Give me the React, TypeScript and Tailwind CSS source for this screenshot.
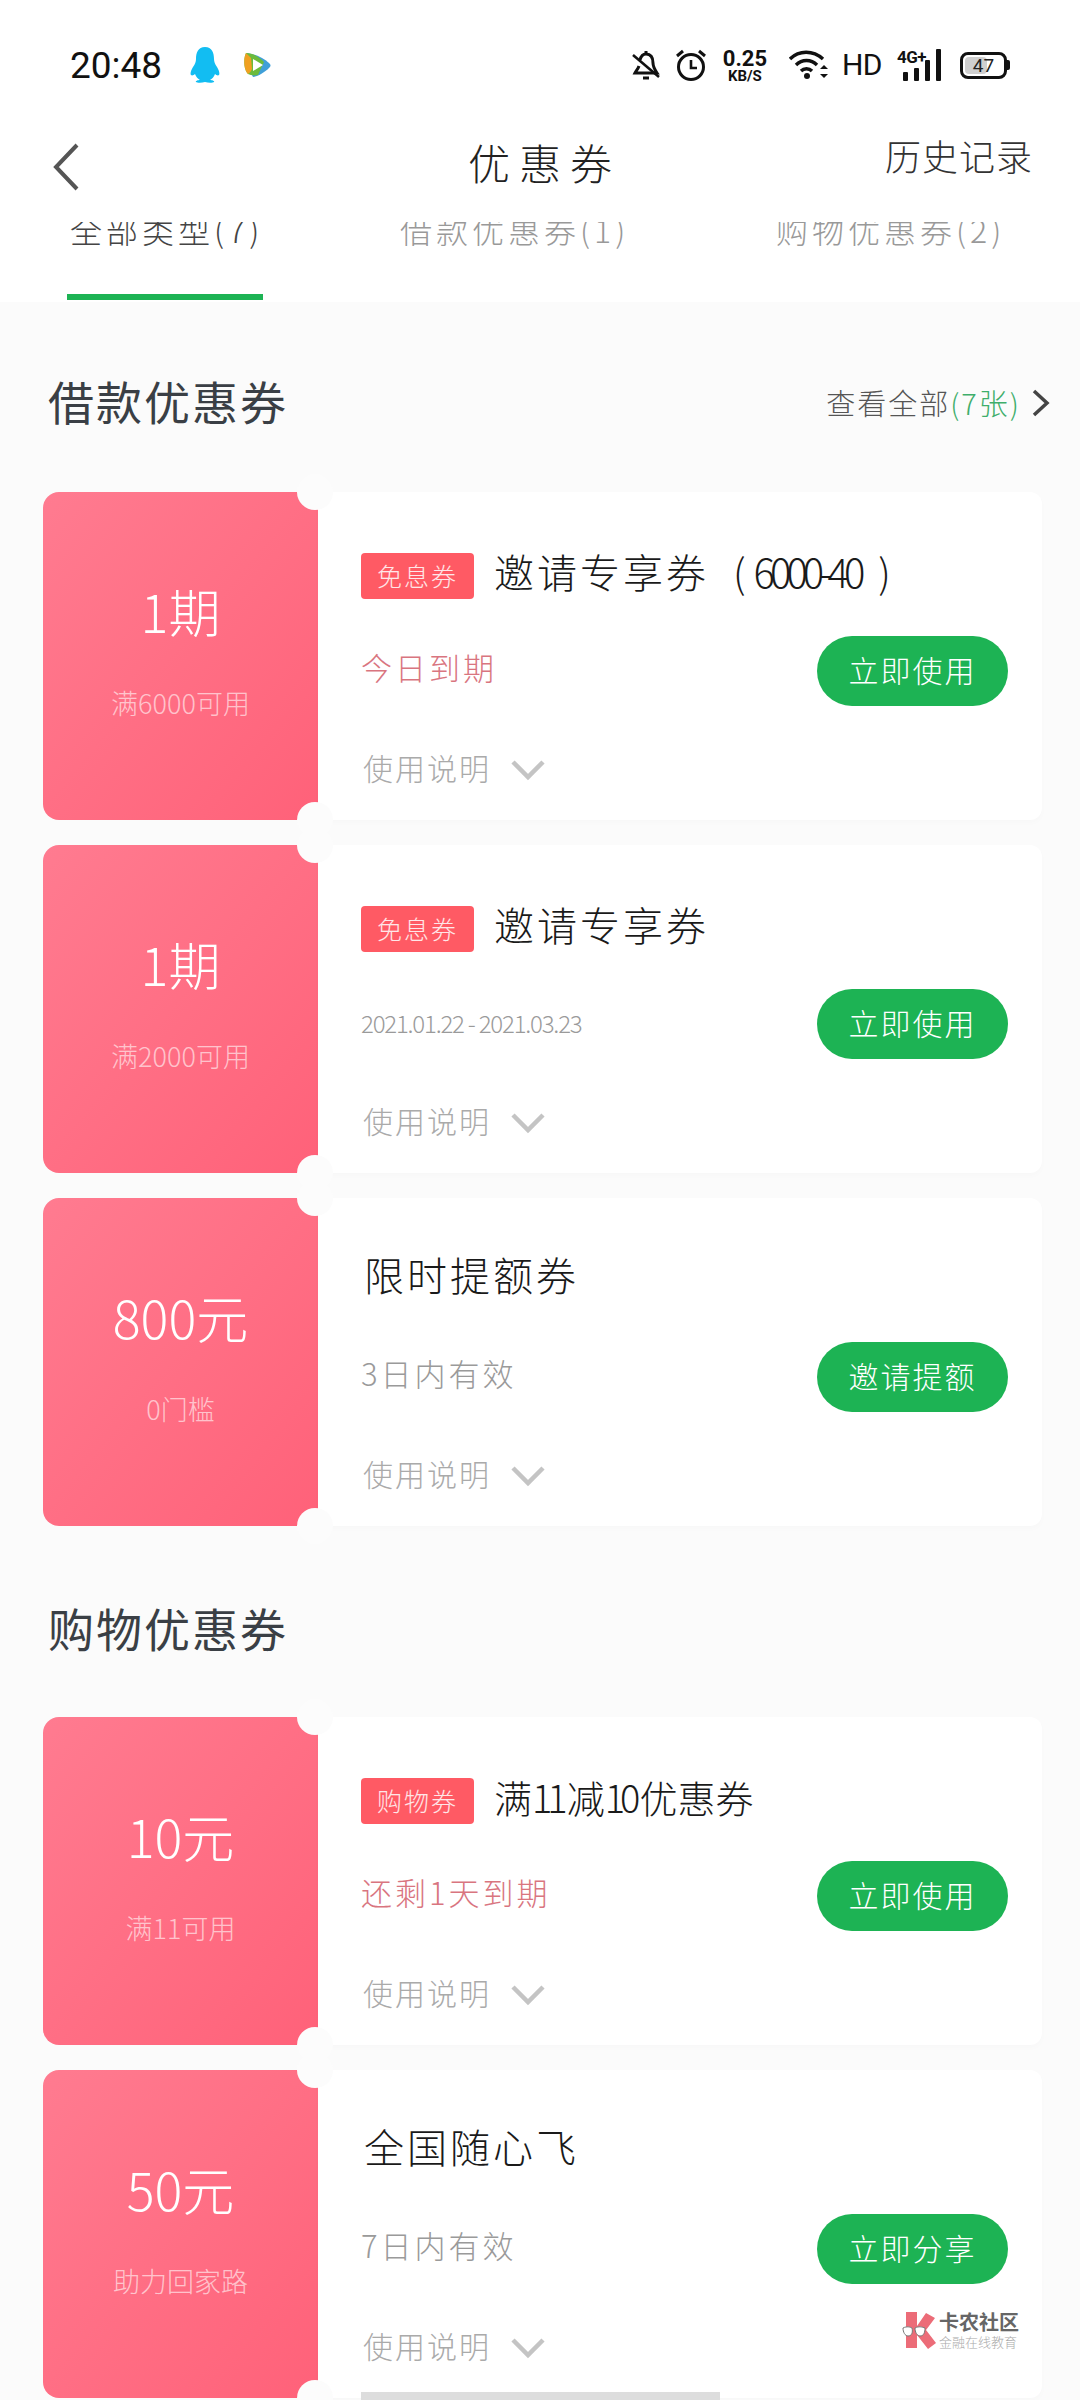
import React from 'react';

interface Coupon {
  amount: React.ReactNode;
  condition: string;
  tag?: string;
  title: React.ReactNode;
  validity: React.ReactNode;
  urgent?: boolean;
  action: string;
  extra?: boolean;
}

const Narrow = ({ children }: { children: React.ReactNode }) => (
  <span className="tracking-[-5px]">{children}</span>
);

const loanCoupons: Coupon[] = [
  {
    amount: '1期',
    condition: '满6000可用',
    tag: '免息券',
    title: (
      <>
        邀请专享券<span className="ml-[24px] tracking-[0px]">(</span>
        <span className="ml-[8px]"><Narrow>6000-40</Narrow></span>
        <span className="ml-[18px]">)</span>
      </>
    ),
    validity: '今日到期',
    urgent: true,
    action: '立即使用',
  },
  {
    amount: '1期',
    condition: '满2000可用',
    tag: '免息券',
    title: '邀请专享券',
    validity: <span className="text-[24px] tracking-[-1.2px]">2021.01.22 - 2021.03.23</span>,
    action: '立即使用',
  },
  { amount: '800元', condition: '0门槛', title: '限时提额券', validity: '3日内有效', action: '邀请提额' },
];

const shopCoupons: Coupon[] = [
  {
    amount: '10元',
    condition: '满11可用',
    tag: '购物券',
    title: <span className="text-[38px] tracking-[0px]">满<Narrow>11</Narrow><span className="ml-[4px]">减</span><Narrow>10</Narrow><span className="ml-[4px]">优惠券</span></span>,
    validity: '还剩1天到期',
    urgent: true,
    action: '立即使用',
  },
  { amount: '50元', condition: '助力回家路', title: '全国随心飞', validity: '7日内有效', action: '立即分享', extra: true },
];

const Penguin = () => (
  <svg width="30" height="36" viewBox="0 0 30 36" className="ml-[28px]">
    <path d="M15 0C8 0 6 6 6 12c0 3-1 5-3 8-2 3-3 7-2 8s3 0 4-1c1 3 3 5 5 6-2 0-5 1-4 2 1 1 6 1 9 0 3 1 8 1 9 0 1-1-2-2-4-2 2-1 4-3 5-6 1 1 3 2 4 1s0-5-2-8c-2-3-3-5-3-8 0-6-2-12-9-12z" fill="#12bdf2" />
  </svg>
);

const VideoLogo = () => (
  <svg width="28" height="26" viewBox="0 0 28 26" className="ml-[23px]">
    <path d="M4 1c8 1 16 5 22 10 2 2 2 3 0 5-4 4-10 8-16 9L4 13z" fill="#3f9fd8" />
    <path d="M3 1c7 0 14 4 18 9l-6 13c-4 1-8 0-10-1C1 18 0 7 3 1z" fill="#6cbb3c" />
    <path d="M3 1C0 7 1 18 5 22c2-1 3-3 4-5L8 6z" fill="#f0a020" />
    <path d="M10 7l10 6-10 6z" fill="#ffffff" />
  </svg>
);

const AlarmIcon = () => (
  <svg width="32" height="32" viewBox="0 0 32 32" fill="none" stroke="#111" strokeWidth="3" className="ml-[15px]">
    <circle cx="16" cy="18" r="12.5" />
    <path d="M16 11v8h6" strokeWidth="2.6" />
    <path d="M2 7l6-5M30 7l-6-5" strokeWidth="3" />
  </svg>
);

const BellIcon = () => (
  <svg width="28" height="32" viewBox="0 0 28 32" fill="none" stroke="#111" strokeWidth="3">
    <path d="M14 2v3" />
    <path d="M8 11c1-4 3-6 6-6 5 0 7 4 7 9 0 4 2 7 4 10H3c1-2 3-4 4-7" />
    <path d="M1 6l26 22" strokeWidth="2.6" />
    <path d="M11 29h6" />
  </svg>
);

const WifiIcon = () => (
  <svg width="40" height="32" viewBox="0 0 40 32" fill="none" stroke="#111" strokeWidth="3.4" className="ml-[20px]">
    <path d="M1 10c9-9 23-9 33 0" />
    <path d="M7 16c6-6 15-6 21 0" />
    <path d="M12 22c3-3 8-3 11 0" />
    <circle cx="18" cy="27" r="3" fill="#111" stroke="none" />
    <path d="M31 20l4-4 4 4zM31 25l4 4 4-4z" fill="#111" stroke="none" />
  </svg>
);

const SignalIcon = () => (
  <div className="relative ml-[15px] h-[32px] w-[44px]">
    <span className="absolute left-0 top-[-2px] text-[17px] font-bold leading-[20px] tracking-[-0.5px] text-[#111]">4G+</span>
    <svg width="44" height="32" viewBox="0 0 44 32" fill="#111" className="absolute left-0 top-0">
      <rect x="6" y="23" width="5" height="9" rx="1" />
      <rect x="17" y="19" width="5" height="13" rx="1" />
      <rect x="28" y="11" width="5" height="21" rx="1" />
      <rect x="39" y="0" width="5" height="32" rx="1" />
    </svg>
  </div>
);

const Battery = () => (
  <div className="ml-[19px] flex items-center">
    <div className="relative h-[27px] w-[47px] overflow-hidden rounded-[8px] border-[3px] border-[#111]">
      <div className="absolute inset-y-[2px] left-[2px] w-[22px] rounded-[4px] bg-[#cfcfcf]" />
      <span className="absolute inset-0 text-center text-[19px] leading-[21px] text-[#222]">47</span>
    </div>
    <div className="h-[10px] w-[3px] rounded-r-[2px] bg-[#111]" />
  </div>
);

const StatusBar = () => (
  <div className="flex h-[130px] items-center pl-[70px] pr-[70px] font-['Roboto',sans-serif] font-normal text-[#111]">
    <span className="text-[37px] leading-none">20:48</span>
    <Penguin />
    <VideoLogo />
    <div className="ml-auto flex items-center">
      <BellIcon />
      <AlarmIcon />
      <div className="ml-[14px] flex w-[48px] flex-col items-center font-bold">
        <span className="text-[22px] leading-[21px]">0.25</span>
        <span className="text-[15px] leading-[14px]">KB/S</span>
      </div>
      <WifiIcon />
      <span className="ml-[13px] text-[30px] leading-none tracking-[-0.5px]">HD</span>
      <SignalIcon />
      <Battery />
    </div>
  </div>
);

const NavBar = () => (
  <div className="grid h-[92px] grid-cols-3">
    <div className="pl-[52px] pt-[13px]">
      <svg width="28" height="48" viewBox="0 0 28 48" fill="none" stroke="#555" strokeWidth="4">
        <path d="M25 2L4 24l21 22" />
      </svg>
    </div>
    <div className="pl-[9px] pt-[8px] text-center text-[42px] leading-[48px] tracking-[9px] text-[#222]">优惠券</div>
    <div className="pr-[47px] pt-[1px] text-right text-[36px] leading-[48px] tracking-[1px] text-[#333]">历史记录</div>
  </div>
);

const Tabs = () => (
  <div className="h-[80px]">
    <div className="h-[72px] overflow-hidden">
      <div className="-mt-[15px] flex pl-[70px] text-[32px] leading-[44px] tracking-[4px] text-[#999]">
        <span className="w-[330px] text-[#444]">全部类型(7)</span>
        <span className="w-[376px]">借款优惠券(1)</span>
        <span>购物优惠券(2)</span>
      </div>
    </div>
    <div className="ml-[67px] h-[6px] w-[196px] bg-[#1db354]" />
  </div>
);

const SectionHeading = ({ title, more, className }: { title: string; more?: boolean; className: string }) => (
  <div className={`flex h-[58px] items-center justify-between pl-[48px] pr-[30px] ${className}`}>
    <h2 className="pb-[6px] text-[46px] font-normal leading-[58px] tracking-[2px] text-[#3a3f45]">{title}</h2>
    {more && (
      <div className="flex items-center text-[29px] tracking-[2px] text-[#555]">
        查看全部<span className="text-[#3fae6b]">(7张)</span>
        <svg width="18" height="28" viewBox="0 0 18 28" fill="none" stroke="#444" strokeWidth="3.5" className="ml-[11px]">
          <path d="M2 2l13 12L2 26" />
        </svg>
      </div>
    )}
  </div>
);

const CouponCard = ({ coupon }: { coupon: Coupon }) => (
  <div className="relative ml-[43px] flex h-[328px] w-[999px]">
    <div className="flex w-[275px] shrink-0 flex-col items-center rounded-l-[16px] bg-gradient-to-br from-[#ff7b90] to-[#ff6179] pt-[84px] text-white">
      <div className="h-[70px] text-[52px] leading-[70px]">{coupon.amount}</div>
      <div className="mt-[37px] h-[40px] text-[27px] leading-[40px] text-white/60">{coupon.condition}</div>
    </div>
    <div className="flex-1 rounded-r-[12px] bg-white pl-[43px] pr-[34px] pt-[61px] shadow-[0_3px_6px_rgba(0,0,0,0.015)]">
      <div className="flex h-[46px] items-center">
        {coupon.tag && (
          <span className="mr-[20px] flex h-[46px] w-[113px] items-center justify-center rounded-[4px] bg-[#ff5a64] text-[25px] tracking-[2px] text-white/85">
            {coupon.tag}
          </span>
        )}
        <span className={`whitespace-nowrap text-[40px] leading-[46px] tracking-[3px] text-[#1a1a1a] ${coupon.tag ? 'pb-[10px]' : 'ml-[3px] pb-[16px]'}`}>{coupon.title}</span>
      </div>
      <div className="mt-[37px] flex h-[70px] items-center justify-between">
        <span className={`pb-[8px] text-[31px] tracking-[3px] ${coupon.urgent ? 'text-[#d9757f]' : 'text-[#9a9a9a]'}`}>{coupon.validity}</span>
        <span className="flex h-[70px] w-[191px] items-center justify-center rounded-full bg-[#1db354] pb-[4px] text-[30px] tracking-[2px] text-white">
          {coupon.action}
        </span>
      </div>
      <div className="mt-[44px] flex h-[40px] items-center">
        <span className="pb-[5px] pl-[2px] text-[30px] tracking-[2px] text-[#aaa]">使用说明</span>
        <svg width="34" height="22" viewBox="0 0 34 22" fill="none" stroke="#c4c4c4" strokeWidth="4.5" className="ml-[20px]">
          <path d="M2 3l15 15L32 3" />
        </svg>
      </div>
      {coupon.extra && <div className="mt-[24px] h-[8px] w-[359px] bg-[#dddddd]" />}
    </div>
    <span className="absolute left-[254px] top-[-18px] h-[36px] w-[36px] rounded-full bg-[#fcfcfc]" />
    <span className="absolute bottom-[-18px] left-[254px] h-[36px] w-[36px] rounded-full bg-[#fcfcfc]" />
  </div>
);

const Watermark = () => (
  <div className="absolute left-[902px] top-[2310px] flex items-center">
    <svg width="36" height="38" viewBox="0 0 36 38">
      <path d="M4 1h11v14l9-13 9 5-9 12 10 13-8 6-11-14v13H4z" fill="#ec6c78" />
      <path d="M1 17c4-2 7-1 9 0 1 4 0 8-4 8-3 0-5-4-5-8zM13 17c4-2 7-1 10 0 0 4-1 8-5 8-3 0-5-4-5-8z" fill="#ffffff" stroke="#777" strokeWidth="1" />
    </svg>
    <div className="ml-[1px] flex flex-col">
      <span className="text-[20px] font-bold leading-[24px] text-[#666]">卡农社区</span>
      <span className="text-[13px] leading-[16px] text-[#aaa]">金融在线教育</span>
    </div>
  </div>
);

export default function App() {
  return (
    <div className="relative h-[2400px] w-[1080px] overflow-hidden bg-white font-['Noto_Sans_CJK_SC','Noto_Sans',sans-serif] font-light">
      <StatusBar />
      <NavBar />
      <Tabs />
      <main className="h-[2098px] bg-[#fbfbfb] pt-[72px]">
        <SectionHeading title="借款优惠券" more className="mb-[60px]" />
        <div className="flex flex-col gap-[25px]">
          {loanCoupons.map((c, i) => (
            <CouponCard key={i} coupon={c} />
          ))}
        </div>
        <SectionHeading title="购物优惠券" className="mb-[58px] mt-[75px]" />
        <div className="flex flex-col gap-[25px]">
          {shopCoupons.map((c, i) => (
            <CouponCard key={i} coupon={c} />
          ))}
        </div>
      </main>
      <Watermark />
    </div>
  );
}
